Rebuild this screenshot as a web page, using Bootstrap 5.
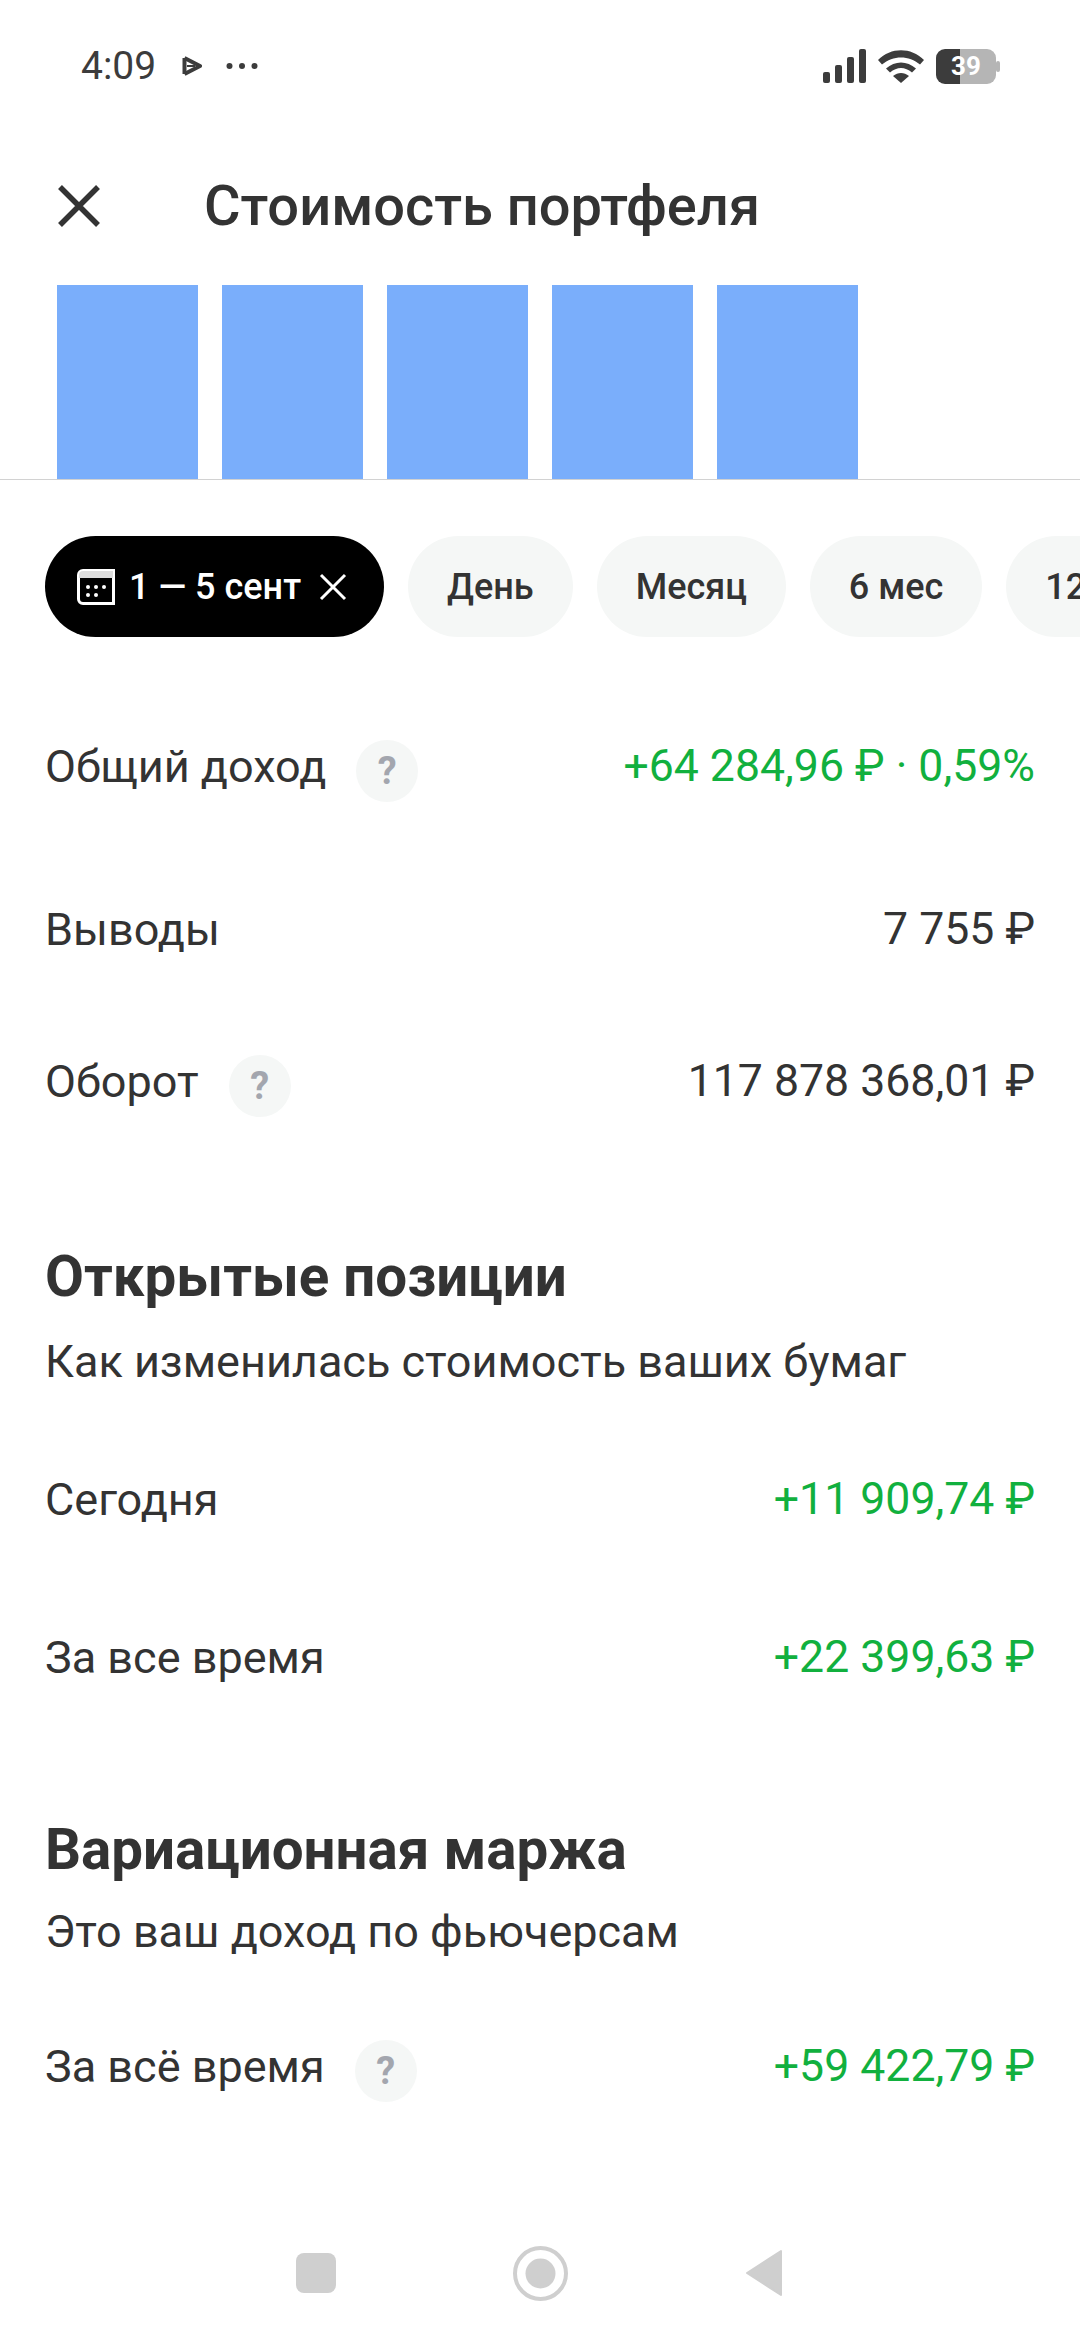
<!DOCTYPE html>
<html lang="ru">
<head>
<meta charset="UTF-8">
<meta name="viewport" content="width=device-width, initial-scale=1.0">
<title>Стоимость портфеля</title>
<link href="https://cdn.jsdelivr.net/npm/bootstrap@5.3.3/dist/css/bootstrap.min.css" rel="stylesheet">
<style>
body { width: 1080px; height: 2340px; overflow: hidden; background: #fff; color: #333; font-family: Roboto, "Noto Sans", sans-serif; }
.screen { height: 2340px; }
.status-bar { height: 132px; padding: 0 0 0 81px; color: #3c3c3c; }
.status-time { font-size: 39px; line-height: 1; width: 93px; }
.status-right { margin-left: auto; margin-right: 80px; gap: 12px; }
.top-bar { height: 153px; padding-bottom: 6px; }
.close-btn { width: 58px; margin-left: 50px; }
.page-title { font-size: 56px; font-weight: 500; line-height: 1; margin: 0 0 0 96px; color: #333; }
.bars { height: 194px; padding-left: 57px; gap: 24px; border-bottom: 1px solid #d2d2d2; box-sizing: content-box; }
.bar-block { width: 141px; background: #7aaefb; }
.chips { padding: 56px 0 0 45px; gap: 24px; overflow: hidden; white-space: nowrap; }
.chip { height: 101px; border-radius: 51px; background: #f5f7f6; font-size: 36px; font-weight: 500; color: #333; padding: 0 39px; flex: none; }
.chip-active { background: #000; color: #fff; padding: 0 37px 0 32px; }
.cal-icon { margin-right: 14px; }
.chip-x { margin-left: 18px; }
.data-row { padding: 0 45px; font-size: 45px; line-height: 1; color: #333; }
.help-dot { width: 62px; height: 62px; border-radius: 50%; background: #f5f7f6; color: #a3a6ae; font-size: 38px; font-weight: 700; margin: 9px 0 0 30px; }
.amount { font-size: 44.6px; }
.amount-up { color: #11b03e; }
.section-title { font-size: 56.5px; font-weight: 700; line-height: 1; margin: 0; padding: 0 45px; color: #333; }
.section-sub { font-size: 45px; line-height: 1; padding: 0 45px; color: #333; }
.r1 { margin-top: 98px; height: 62px; }
.r2 { margin-top: 101px; height: 62px; }
.r3 { margin-top: 90px; height: 62px; }
.s1 { margin-top: 137px; }
.s1b { margin-top: 33px; }
.r4 { margin-top: 85px; height: 62px; }
.r5 { margin-top: 96px; height: 62px; }
.s2 { margin-top: 133px; }
.s2b { margin-top: 31px; }
.r6 { margin-top: 81px; height: 62px; }
.nav-bar { position: fixed; left: 0; right: 0; top: 2238px; height: 70px; padding-left: 296px; gap: 177px; }
</style>
</head>
<body>
<div class="screen d-flex flex-column">
  <div class="status-bar d-flex align-items-center">
    <span class="status-time">4:09</span>
    <svg class="ms-2" width="20" height="22" viewBox="0 0 20 22" fill="none" stroke="#3c3c3c" stroke-linejoin="round"><path d="M2.5 3 18 11 2.5 19" stroke-width="4"/><path d="M2.5 3V19" stroke-width="4"/><path d="M5 11H13" stroke-width="2"/></svg>
    <svg class="ms-4" width="32" height="8" viewBox="0 0 32 8" fill="#3c3c3c"><circle cx="3.5" cy="4" r="3"/><circle cx="16" cy="4" r="3"/><circle cx="28.5" cy="4" r="3"/></svg>
    <div class="status-right d-flex align-items-center">
      <svg width="43" height="34" viewBox="0 0 43 34" fill="#3c3c3c"><rect x="0" y="23" width="7" height="11" rx="2"/><rect x="12" y="16" width="7" height="18" rx="2"/><rect x="24" y="8" width="7" height="26" rx="2"/><rect x="36" y="0" width="7" height="34" rx="2"/></svg>
      <svg width="46" height="33" viewBox="0 0 46 33" fill="#3c3c3c"><path d="M0 10C13-3 33-3 46 10L42 14.500C31 5 15 5 4 14.500Z"/><path d="M8 18.500C17 10.500 29 10.500 38 18.500L34 22.500C27 16.500 19 16.500 12 22.500Z"/><path d="M15 26C20 22 26 22 31 26L23 33Z"/></svg>
      <svg width="64" height="35" viewBox="0 0 64 35"><path d="M9 0H24V35H9A9 9 0 0 1 0 26V9A9 9 0 0 1 9 0Z" fill="#3c3c3c"/><path d="M24 0H51A9 9 0 0 1 60 9V26A9 9 0 0 1 51 35H24Z" fill="#b5b5b5"/><rect x="60" y="12" width="4" height="11" rx="2" fill="#b5b5b5"/><text x="30" y="26" text-anchor="middle" font-family="Roboto" font-size="26" font-weight="700" fill="#fff">39</text></svg>
    </div>
  </div>

  <div class="top-bar d-flex align-items-center">
    <svg class="close-btn" width="58" height="58" viewBox="0 0 58 58" stroke="#333" stroke-width="5.500" fill="none"><path d="M10 10 48 48M48 10 10 48"/></svg>
    <h1 class="page-title">Стоимость портфеля</h1>
  </div>

  <div class="bars d-flex">
    <div class="bar-block"></div>
    <div class="bar-block"></div>
    <div class="bar-block"></div>
    <div class="bar-block"></div>
    <div class="bar-block"></div>
  </div>

  <div class="chips d-flex">
    <div class="chip chip-active d-flex align-items-center">
      <svg class="cal-icon" width="38" height="36" viewBox="0 0 38 36" fill="none"><path d="M1.500 6A4.500 4.500 0 0 1 6 1.500H36.500V34.500H6A4.500 4.500 0 0 1 1.500 30Z" stroke="#fff" stroke-width="3"/><path d="M2 6A4 4 0 0 1 6 2H36V9H2Z" fill="#ddd"/><g fill="#fff"><circle cx="11" cy="18" r="2"/><circle cx="19" cy="18" r="2"/><circle cx="27" cy="18" r="2"/><circle cx="11" cy="26" r="2"/><circle cx="19" cy="26" r="2"/></g></svg>
      <span>1 — 5 сент</span>
      <svg class="chip-x" width="28" height="28" viewBox="0 0 28 28" stroke="#fff" stroke-width="3" fill="none"><path d="M2 2 26 26M26 2 2 26"/></svg>
    </div>
    <div class="chip d-flex align-items-center">День</div>
    <div class="chip d-flex align-items-center">Месяц</div>
    <div class="chip d-flex align-items-center">6 мес</div>
    <div class="chip d-flex align-items-center">12 мес</div>
  </div>

  <div class="data-row r1 d-flex align-items-center justify-content-between">
    <div class="d-flex align-items-center"><span>Общий доход</span><span class="help-dot d-flex align-items-center justify-content-center">?</span></div>
    <span class="amount amount-up">+64 284,96 ₽ · 0,59%</span>
  </div>
  <div class="data-row r2 d-flex align-items-center justify-content-between">
    <span>Выводы</span><span class="amount">7 755 ₽</span>
  </div>
  <div class="data-row r3 d-flex align-items-center justify-content-between">
    <div class="d-flex align-items-center"><span>Оборот</span><span class="help-dot d-flex align-items-center justify-content-center">?</span></div>
    <span class="amount">117 878 368,01 ₽</span>
  </div>

  <h2 class="section-title s1">Открытые позиции</h2>
  <div class="section-sub s1b">Как изменилась стоимость ваших бумаг</div>
  <div class="data-row r4 d-flex align-items-center justify-content-between">
    <span>Сегодня</span><span class="amount amount-up">+11 909,74 ₽</span>
  </div>
  <div class="data-row r5 d-flex align-items-center justify-content-between">
    <span>За все время</span><span class="amount amount-up">+22 399,63 ₽</span>
  </div>

  <h2 class="section-title s2">Вариационная маржа</h2>
  <div class="section-sub s2b">Это ваш доход по фьючерсам</div>
  <div class="data-row r6 d-flex align-items-center justify-content-between">
    <div class="d-flex align-items-center"><span>За всё время</span><span class="help-dot d-flex align-items-center justify-content-center">?</span></div>
    <span class="amount amount-up">+59 422,79 ₽</span>
  </div>
</div>

<div class="nav-bar d-flex align-items-center">
  <svg width="40" height="40" viewBox="0 0 40 40"><rect width="40" height="40" rx="8" fill="#cfcfcf"/></svg>
  <svg width="55" height="55" viewBox="0 0 55 55" fill="none"><circle cx="27.500" cy="27.500" r="25.500" stroke="#cfcfcf" stroke-width="4"/><circle cx="27.500" cy="27.500" r="15" fill="#cfcfcf"/></svg>
  <svg width="38" height="48" viewBox="0 0 38 48"><path d="M36 2V46L2 24Z" fill="#cfcfcf" stroke="#cfcfcf" stroke-width="2" stroke-linejoin="round"/></svg>
</div>
<script src="https://cdn.jsdelivr.net/npm/bootstrap@5.3.3/dist/js/bootstrap.bundle.min.js"></script>
</body>
</html>
